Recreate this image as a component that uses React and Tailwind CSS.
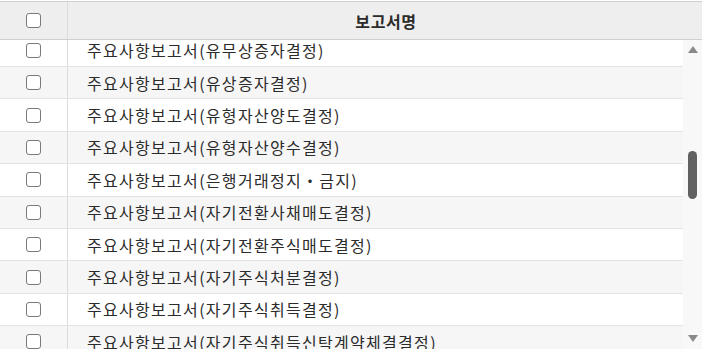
import React from "react";

const rows = [
  "주요사항보고서(유무상증자결정)",
  "주요사항보고서(유상증자결정)",
  "주요사항보고서(유형자산양도결정)",
  "주요사항보고서(유형자산양수결정)",
  "주요사항보고서(은행거래정지・금지)",
  "주요사항보고서(자기전환사채매도결정)",
  "주요사항보고서(자기전환주식매도결정)",
  "주요사항보고서(자기주식처분결정)",
  "주요사항보고서(자기주식취득결정)",
  "주요사항보고서(자기주식취득신탁계약체결결정)",
  "주요사항보고서(자기주식취득신탁계약해지결정)",
  "주요사항보고서(자본감소결정)",
];

function Box() {
  return (
    <span className="block w-[15px] h-[15px] rounded-[3px] border-[1.5px] border-[#7a7a7a] bg-white" />
  );
}

export default function App() {
  return (
    <div
      className="w-[702px] h-[349px] overflow-hidden bg-white text-[#2b2b2b]"
      style={{ fontFamily: '"Noto Sans CJK KR", "Noto Sans", sans-serif' }}
    >
      <div className="h-px bg-white" />
      <div className="flex h-[39px] bg-[#eeeeee] border-t border-b border-[#cfcfcf]">
        <div className="w-[68px] shrink-0 flex items-center justify-center border-r border-[#dcdcdc]">
          <Box />
        </div>
        <div className="flex-1 flex items-center justify-center text-[16px] font-bold tracking-[0.6px] pl-[2px]">
          보고서명
        </div>
      </div>
      <div className="flex h-[309px]">
        <div className="w-[683px] overflow-hidden">
          <div className="-mt-[5.4px]">
            {rows.map((r, i) => (
              <div
                key={i}
                className={`flex h-[32.4px] border-b border-[#e3e3e3] ${i % 2 === 1 ? "bg-[#f6f6f6]" : "bg-white"}`}
              >
                <div className="w-[68px] shrink-0 flex items-center justify-center border-r border-[#dcdcdc]">
                  <Box />
                </div>
                <div className="flex-1 flex items-center pl-[19px] text-[16px] tracking-[1.3px] whitespace-nowrap">
                  {r}
                </div>
              </div>
            ))}
          </div>
        </div>
        <div className="w-[19px] bg-[#f8f8f8] flex flex-col items-center">
          <svg width="10" height="8" viewBox="0 0 10 8" className="mt-[6px]">
            <polygon points="5,0 10,7 0,7" fill="#8a8a8a" />
          </svg>
          <div className="mt-[97px] w-[9px] h-[48px] rounded-full bg-[#616161]" />
          <div className="flex-1" />
          <svg width="10" height="8" viewBox="0 0 10 8" className="mb-[6px]">
            <polygon points="0,0 10,0 5,7" fill="#8a8a8a" />
          </svg>
        </div>
      </div>
    </div>
  );
}
